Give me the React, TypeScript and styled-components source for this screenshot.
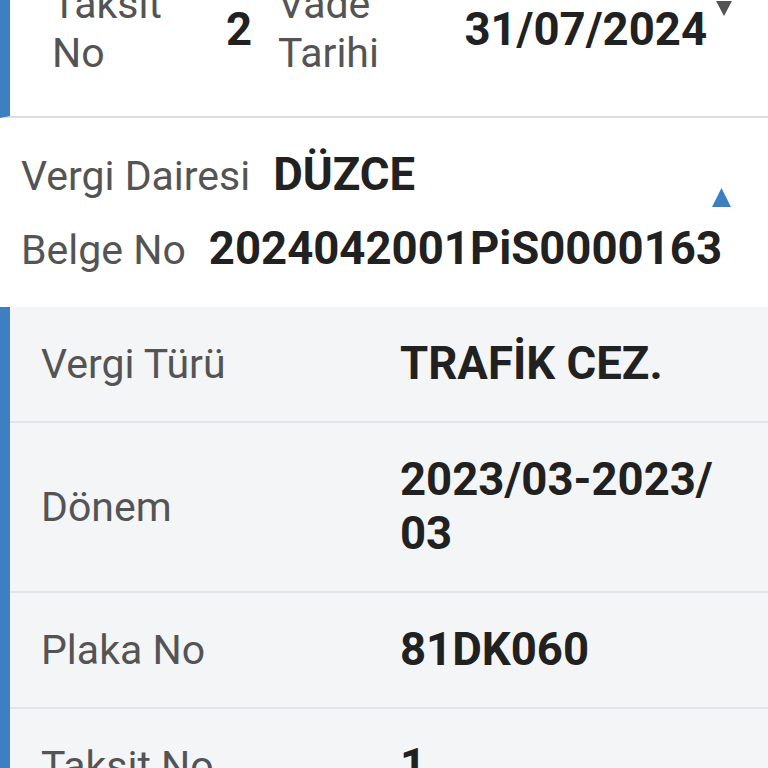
import styled, { createGlobalStyle } from "styled-components";

const GlobalStyle = createGlobalStyle`
  html, body {
    margin: 0;
    padding: 0;
    background: #ffffff;
    overflow: hidden;
  }
  body {
    font-family: Roboto, "Noto Sans", "Liberation Sans", sans-serif;
  }
`;

const Page = styled.div`
  display: flex;
  flex-direction: column;
  width: 768px;
  margin-top: -58px;
`;

const InstallmentCard = styled.div`
  position: relative;
  background: #ffffff;
  border-left: 10px solid #3d7fc0;
  border-bottom: 2px solid #dcdcdc;
`;

const InstallmentRow = styled.div`
  display: flex;
  gap: 26px;
  padding: 38px 61px 38px 42px;
`;

interface PairProps {
  width?: number;
}

const Pair = styled.div<PairProps>`
  display: flex;
  align-items: center;
  justify-content: space-between;
  flex: ${(p) => (p.width ? `0 0 ${p.width}px` : "1")};
`;

const Label = styled.span`
  font-size: 41px;
  line-height: 49px;
  color: #545454;
`;

const Value = styled.span`
  font-size: 45.5px;
  line-height: 49px;
  font-weight: 700;
  color: #212121;
`;

const Caret = styled.svg<{ $top: number; $right: number }>`
  position: absolute;
  top: ${(p) => p.$top}px;
  right: ${(p) => p.$right}px;
`;

const OfficeSection = styled.div`
  position: relative;
  display: flex;
  flex-direction: column;
  gap: 21px;
  padding: 31px 22px 31px 21px;
  background: #ffffff;
`;

const OfficeLine = styled.div`
  display: flex;
  align-items: baseline;
  gap: 23px;
  line-height: 52px;
`;

const OfficeLabel = styled(Label)`
  line-height: 52px;
`;

const OfficeValue = styled(Value)`
  line-height: 52px;
`;

const DetailTable = styled.div`
  display: flex;
  flex-direction: column;
  background: #f4f5f7;
  border-left: 10px solid #3d7fc0;
`;

const DetailRow = styled.div`
  display: grid;
  grid-template-columns: 359px 1fr;
  align-items: center;
  padding: 30px 46px 30px 31px;
  border-bottom: 2px solid #e2e4e8;
`;

const DetailLabel = styled(Label)`
  line-height: 54px;
`;

const DetailValue = styled(Value)`
  line-height: 54px;
  word-break: break-all;
`;

const details = [
  { label: "Vergi Türü", value: "TRAFİK CEZ." },
  { label: "Dönem", value: "2023/03-2023/03" },
  { label: "Plaka No", value: "81DK060" },
  { label: "Taksit No", value: "1" },
];

const App = () => {
  return (
    <>
      <GlobalStyle />
      <Page>
        <InstallmentCard>
          <InstallmentRow>
            <Pair width={200}>
              <Label>
                Taksit
                <br />
                No
              </Label>
              <Value>2</Value>
            </Pair>
            <Pair>
              <Label>
                Vade
                <br />
                Tarihi
              </Label>
              <Value>31/07/2024</Value>
            </Pair>
          </InstallmentRow>
          <Caret $top={59} $right={36} width="16" height="15" viewBox="0 0 16 15">
            <polygon points="0,0 16,0 8,15" fill="#555555" />
          </Caret>
        </InstallmentCard>

        <OfficeSection>
          <OfficeLine>
            <OfficeLabel>Vergi Dairesi</OfficeLabel>
            <OfficeValue>DÜZCE</OfficeValue>
          </OfficeLine>
          <OfficeLine>
            <OfficeLabel>Belge No</OfficeLabel>
            <OfficeValue>2024042001PiS0000163</OfficeValue>
          </OfficeLine>
          <Caret $top={70} $right={37} width="19" height="19" viewBox="0 0 19 19">
            <polygon points="9.5,0 19,19 0,19" fill="#3d7fc0" />
          </Caret>
        </OfficeSection>

        <DetailTable>
          {details.map((row) => (
            <DetailRow key={row.label}>
              <DetailLabel>{row.label}</DetailLabel>
              <DetailValue>{row.value}</DetailValue>
            </DetailRow>
          ))}
        </DetailTable>
      </Page>
    </>
  );
};

export default App;
